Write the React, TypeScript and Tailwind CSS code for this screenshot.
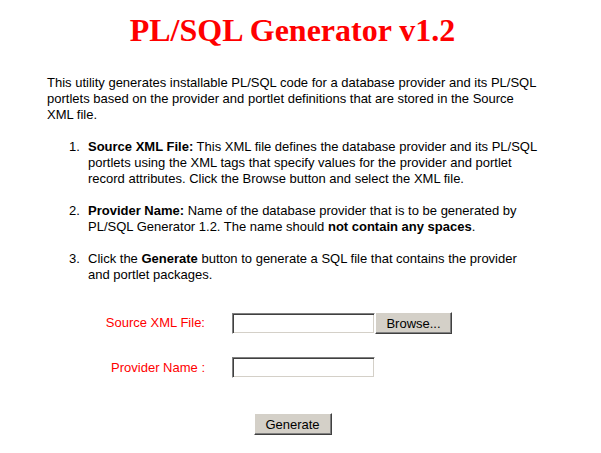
export default function App() {
  const inputCls =
    "h-[21px] w-[143px] bg-white border border-t-[#808080] border-l-[#808080] border-b-white border-r-white shadow-[inset_1px_1px_0_#404040,inset_-1px_-1px_0_#d4d0c8] outline-none";
  const btnCls =
    "h-[22px] bg-[#d4d0c8] border border-t-white border-l-white border-r-[#404040] border-b-[#404040] shadow-[inset_-1px_-1px_0_#808080] text-[13px] leading-none text-black";

  return (
    <div className="w-[601px] min-h-[453px] bg-white">
      <div className="w-[585px] font-['Liberation_Sans',Arial,sans-serif] text-[13px] leading-[16px] text-black">
        <h1 className="pt-[12px] text-center font-['Liberation_Serif','Times_New_Roman',serif] text-[32px] leading-[37px] font-bold text-[#ff0000]">
          PL/SQL Generator v1.2
        </h1>

        <div className="ml-[47px] mt-[26px] w-[496px]">
          <p>
            This utility generates installable PL/SQL code for a database provider and its PL/SQL
            portlets based on the provider and portlet definitions that are stored in the Source
            XML file.
          </p>

          <div className="mt-[16px] ml-[22px] flex flex-col gap-[16px]">
            <div className="flex">
              <span className="w-[19px] shrink-0">1.</span>
              <div className="w-[455px]">
                <b>Source XML File:</b> This XML file defines the database provider and its PL/SQL
                portlets using the XML tags that specify values for the provider and portlet
                record attributes. Click the Browse button and select the XML file.
              </div>
            </div>
            <div className="flex">
              <span className="w-[19px] shrink-0">2.</span>
              <div className="w-[455px]">
                <b>Provider Name:</b> Name of the database provider that is to be generated by
                PL/SQL Generator 1.2. The name should <b>not contain any spaces</b>.
              </div>
            </div>
            <div className="flex">
              <span className="w-[19px] shrink-0">3.</span>
              <div className="w-[440px]">
                Click the <b>Generate</b> button to generate a SQL file that contains the provider
                and portlet packages.
              </div>
            </div>
          </div>
        </div>

        <div className="mt-[29px] flex items-center">
          <label className="ml-[47px] w-[158px] text-right text-[#ff0000]">Source XML File:</label>
          <input type="text" className={`ml-[27px] ${inputCls}`} />
          <button type="button" className={`w-[77px] ${btnCls}`}>
            Browse...
          </button>
        </div>

        <div className="mt-[23px] flex items-center">
          <label className="ml-[47px] w-[158px] text-right text-[#ff0000]">Provider Name :</label>
          <input type="text" className={`ml-[27px] ${inputCls}`} />
        </div>

        <div className="mt-[35px] flex justify-center">
          <button type="button" className={`w-[78px] ${btnCls}`}>
            Generate
          </button>
        </div>
      </div>
    </div>
  );
}
